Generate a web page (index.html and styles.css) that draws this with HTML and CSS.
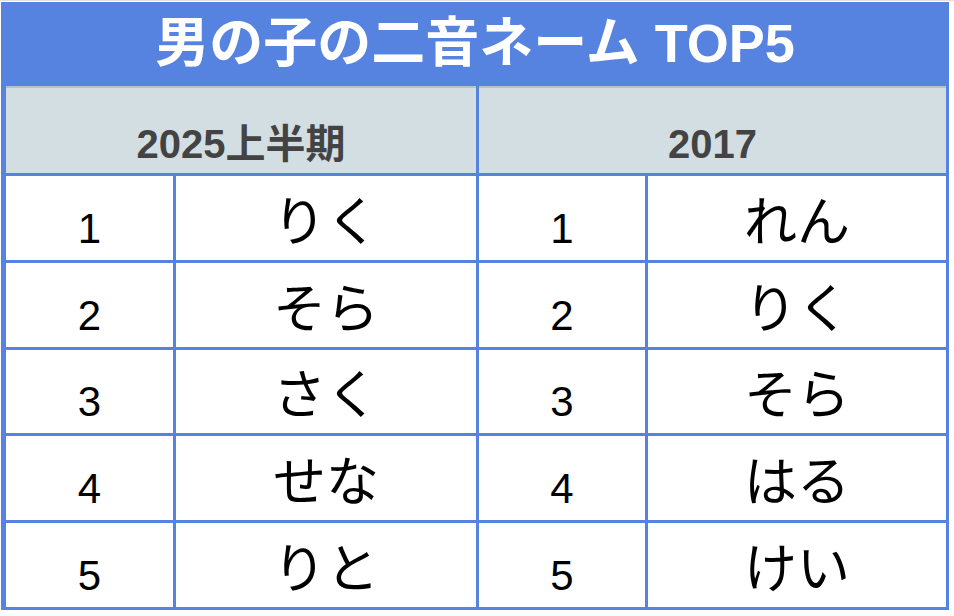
FILE: index.html
```html
<!DOCTYPE html>
<html lang="ja">
<head>
<meta charset="utf-8">
<title>男の子の二音ネーム TOP5</title>
<link rel="stylesheet" href="styles.css">
</head>
<body>
<div class="sheet">
  <div class="title">男の子の二音ネーム TOP5</div>
  <div class="grid">
    <div class="head">2025上半期</div>
    <div class="head">2017</div>

    <div class="cell num">1</div><div class="cell name">りく</div>
    <div class="cell num">1</div><div class="cell name">れん</div>

    <div class="cell num">2</div><div class="cell name">そら</div>
    <div class="cell num">2</div><div class="cell name">りく</div>

    <div class="cell num">3</div><div class="cell name">さく</div>
    <div class="cell num">3</div><div class="cell name">そら</div>

    <div class="cell num">4</div><div class="cell name">せな</div>
    <div class="cell num">4</div><div class="cell name">はる</div>

    <div class="cell num">5</div><div class="cell name">りと</div>
    <div class="cell num">5</div><div class="cell name">けい</div>
  </div>
</div>
</body>
</html>
```
FILE: styles.css
```css
html, body {
  margin: 0;
  padding: 0;
  background: #ffffff;
}

body {
  width: 954px;
  height: 616px;
  overflow: hidden;
  padding-top: 2px;
  box-sizing: border-box;
  background:
    linear-gradient(#e2e2e2, #e2e2e2) 0 0 / 100% 1px no-repeat,
    #ffffff;
}

.sheet {
  margin-left: 1px;
  width: 948px;
  background: #5783e0;
}

.title {
  height: 84px;
  display: flex;
  align-items: center;
  justify-content: center;
  padding-bottom: 2px;
  box-sizing: border-box;
  color: #ffffff;
  font-family: "Liberation Sans", "Noto Sans CJK JP", sans-serif;
  font-weight: 700;
  font-size: 54px;
  line-height: 1;
}

.grid {
  display: grid;
  grid-template-columns: 167px 300px 166px 298px;
  grid-template-rows: 87px;
  grid-auto-rows: 83.8px;
  column-gap: 3px;
  row-gap: 3px;
  padding: 0 3px 3px 5px;
}

.head {
  grid-column: span 2;
  background: #d3dee3;
  border-top: 2px solid #b8c2c7;
  display: flex;
  align-items: flex-end;
  justify-content: center;
  padding-bottom: 9px;
  box-sizing: border-box;
  color: #434343;
  font-family: "Liberation Sans", "Noto Sans CJK JP", sans-serif;
  font-weight: 700;
  font-size: 40px;
  line-height: 1;
}

.head.year {
  letter-spacing: 1px;
}

.cell {
  background: #ffffff;
  display: flex;
  align-items: flex-end;
  justify-content: center;
  box-sizing: border-box;
  color: #000000;
  line-height: 1;
}

.num {
  font-family: "Liberation Sans", "Noto Sans CJK JP", sans-serif;
  font-size: 42px;
  padding-bottom: 10px;
}

.name {
  font-family: "Noto Sans CJK JP", sans-serif;
  font-size: 53px;
  padding-bottom: 15px;
}
```
